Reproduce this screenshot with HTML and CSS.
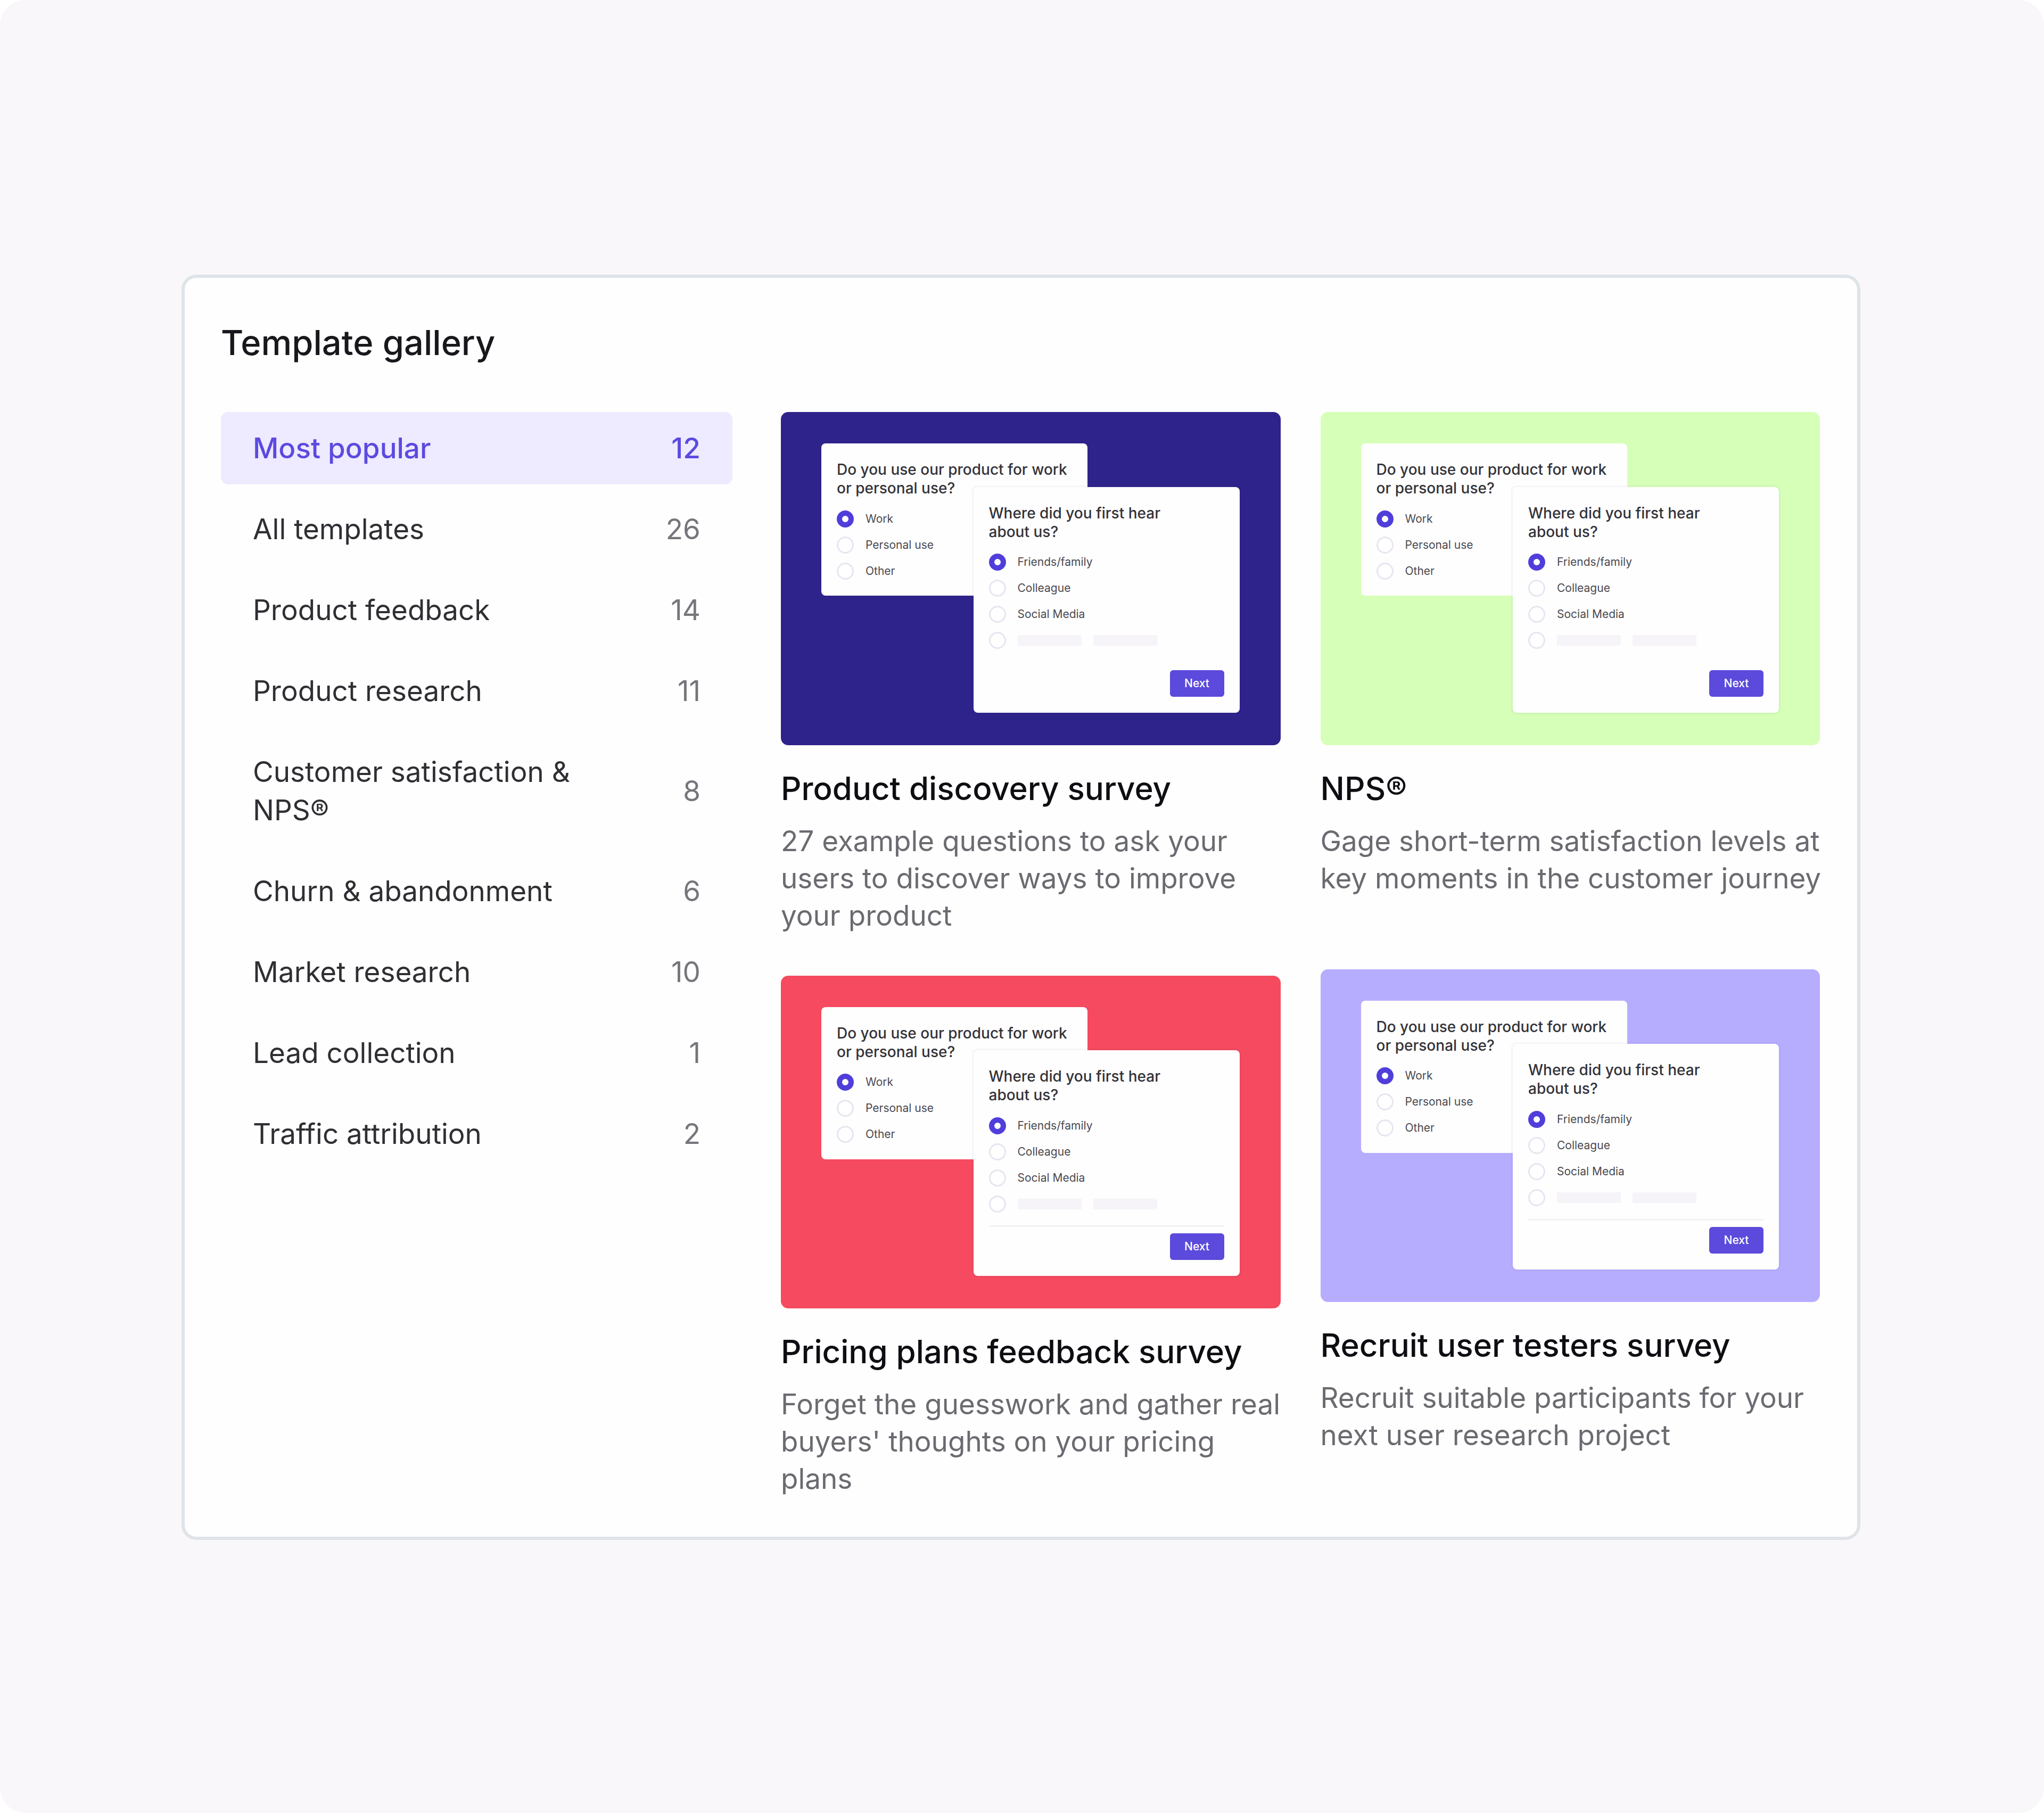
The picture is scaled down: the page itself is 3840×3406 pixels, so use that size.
FILE: index.html
```html
<!DOCTYPE html>
<html lang="en">
<head>
<meta charset="utf-8">
<title>Template gallery</title>
<link rel="stylesheet" href="styles.css">
</head>
<body>
<main class="page">
  <section class="panel">
    <h1 class="panel-title">Template gallery</h1>
    <div class="layout">
      <nav aria-label="Template categories">
        <ul class="categories">
          <li><a class="category is-active" href="#popular" aria-current="page"><span class="category-name">Most popular</span><span class="count">12</span></a></li>
          <li><a class="category" href="#all"><span class="category-name">All templates</span><span class="count">26</span></a></li>
          <li><a class="category" href="#feedback"><span class="category-name">Product feedback</span><span class="count">14</span></a></li>
          <li><a class="category" href="#research"><span class="category-name">Product research</span><span class="count">11</span></a></li>
          <li><a class="category" href="#nps"><span class="category-name">Customer satisfaction &amp; NPS®</span><span class="count">8</span></a></li>
          <li><a class="category" href="#churn"><span class="category-name">Churn &amp; abandonment</span><span class="count">6</span></a></li>
          <li><a class="category" href="#market"><span class="category-name">Market research</span><span class="count">10</span></a></li>
          <li><a class="category" href="#leads"><span class="category-name">Lead collection</span><span class="count">1</span></a></li>
          <li><a class="category" href="#traffic"><span class="category-name">Traffic attribution</span><span class="count">2</span></a></li>
        </ul>
      </nav>
      <div class="gallery">
        <div class="column">
          <article class="card">
            <div class="preview preview-navy">
              <form class="survey survey-back">
                <p class="question">Do you use our product for work or personal use?</p>
                <label class="option"><input type="radio" name="use1" checked>Work</label>
                <label class="option"><input type="radio" name="use1">Personal use</label>
                <label class="option"><input type="radio" name="use1">Other</label>
              </form>
              <form class="survey survey-front">
                <p class="question">Where did you first hear<br>about us?</p>
                <label class="option"><input type="radio" name="hear1" checked>Friends/family</label>
                <label class="option"><input type="radio" name="hear1">Colleague</label>
                <label class="option"><input type="radio" name="hear1">Social Media</label>
                <label class="option"><input type="radio" name="hear1" aria-label="Something else"><span class="bar"></span><span class="bar"></span></label>
                <div class="actions"><button class="next" type="button">Next</button></div>
              </form>
            </div>
            <h2 class="card-title">Product discovery survey</h2>
            <p class="card-text">27 example questions to ask your users to discover ways to improve your product</p>
          </article>
          <article class="card">
            <div class="preview preview-red">
              <form class="survey survey-back">
                <p class="question">Do you use our product for work or personal use?</p>
                <label class="option"><input type="radio" name="use2" checked>Work</label>
                <label class="option"><input type="radio" name="use2">Personal use</label>
                <label class="option"><input type="radio" name="use2">Other</label>
              </form>
              <form class="survey survey-front">
                <p class="question">Where did you first hear<br>about us?</p>
                <label class="option"><input type="radio" name="hear2" checked>Friends/family</label>
                <label class="option"><input type="radio" name="hear2">Colleague</label>
                <label class="option"><input type="radio" name="hear2">Social Media</label>
                <label class="option"><input type="radio" name="hear2" aria-label="Something else"><span class="bar"></span><span class="bar"></span></label>
                <div class="actions actions-ruled"><button class="next" type="button">Next</button></div>
              </form>
            </div>
            <h2 class="card-title">Pricing plans feedback survey</h2>
            <p class="card-text">Forget the guesswork and gather real buyers' thoughts on your pricing plans</p>
          </article>
        </div>
        <div class="column">
          <article class="card">
            <div class="preview preview-green">
              <form class="survey survey-back">
                <p class="question">Do you use our product for work or personal use?</p>
                <label class="option"><input type="radio" name="use3" checked>Work</label>
                <label class="option"><input type="radio" name="use3">Personal use</label>
                <label class="option"><input type="radio" name="use3">Other</label>
              </form>
              <form class="survey survey-front">
                <p class="question">Where did you first hear<br>about us?</p>
                <label class="option"><input type="radio" name="hear3" checked>Friends/family</label>
                <label class="option"><input type="radio" name="hear3">Colleague</label>
                <label class="option"><input type="radio" name="hear3">Social Media</label>
                <label class="option"><input type="radio" name="hear3" aria-label="Something else"><span class="bar"></span><span class="bar"></span></label>
                <div class="actions"><button class="next" type="button">Next</button></div>
              </form>
            </div>
            <h2 class="card-title">NPS®</h2>
            <p class="card-text">Gage short-term satisfaction levels at key moments in the customer journey</p>
          </article>
          <article class="card">
            <div class="preview preview-lavender">
              <form class="survey survey-back">
                <p class="question">Do you use our product for work or personal use?</p>
                <label class="option"><input type="radio" name="use4" checked>Work</label>
                <label class="option"><input type="radio" name="use4">Personal use</label>
                <label class="option"><input type="radio" name="use4">Other</label>
              </form>
              <form class="survey survey-front">
                <p class="question">Where did you first hear<br>about us?</p>
                <label class="option"><input type="radio" name="hear4" checked>Friends/family</label>
                <label class="option"><input type="radio" name="hear4">Colleague</label>
                <label class="option"><input type="radio" name="hear4">Social Media</label>
                <label class="option"><input type="radio" name="hear4" aria-label="Something else"><span class="bar"></span><span class="bar"></span></label>
                <div class="actions actions-ruled"><button class="next" type="button">Next</button></div>
              </form>
            </div>
            <h2 class="card-title">Recruit user testers survey</h2>
            <p class="card-text">Recruit suitable participants for your next user research project</p>
          </article>
        </div>
      </div>
    </div>
  </section>
</main>
</body>
</html>
```
FILE: styles.css
```css
* {
  box-sizing: border-box;
}

body {
  margin: 0;
  background: #ffffff;
  color: #18171c;
  font-family: Inter, "Liberation Sans", sans-serif;
}

h1, h2, p, ul {
  margin: 0;
  padding: 0;
}

.page {
  min-height: 100vh;
  padding: 516px 345px 512px 341px;
  border-radius: 48px;
  background: #f9f7f9;
}

.panel {
  padding: 82px 70px 74px 68px;
  border: 6px solid #dfe4e9;
  border-radius: 28px;
  background: #fefefe;
}

.panel-title {
  margin-bottom: 90px;
  font-size: 65px;
  font-weight: 500;
  line-height: 80px;
}

.layout {
  display: grid;
  grid-template-columns: 961fr 1952fr;
  column-gap: 91px;
  align-items: start;
}

/* Category list */
.categories {
  display: flex;
  flex-direction: column;
  gap: 16px;
  list-style: none;
}

.category {
  display: flex;
  align-items: center;
  justify-content: space-between;
  gap: 60px;
  padding: 32px 60px;
  border-radius: 14px;
  color: #2f2e33;
  font-size: 53px;
  line-height: 72px;
  text-decoration: none;
}

.category-name {
  max-width: 640px;
}

.count {
  color: #77757b;
}

.is-active {
  background: #eeeaff;
  color: #5b4ae0;
  font-weight: 500;
}

.is-active .count {
  color: inherit;
}

/* Template cards */
.gallery {
  display: grid;
  grid-template-columns: 1fr 1fr;
  column-gap: 75px;
}

.column {
  display: flex;
  flex-direction: column;
  gap: 78px;
}

.card-title {
  margin: 41px 0 24px;
  color: #0e0d12;
  font-size: 60px;
  font-weight: 500;
  line-height: 80px;
}

.card-text {
  min-height: 198px;
  margin-right: -8px;
  color: #6c6a70;
  font-size: 53px;
  line-height: 70px;
}

.preview {
  position: relative;
  aspect-ratio: 3 / 2;
  padding: 59px 76px;
  border-radius: 14px;
}

.preview-navy { background: #2e238a; }
.preview-green { background: #d6ffb8; }
.preview-red { background: #f54a5f; }
.preview-lavender { background: #b7adff; }

/* Miniature survey forms */
.survey {
  width: 500px;
  padding: 32px 29px 22px;
  border-radius: 8px;
  background: #fefefe;
}

.survey-front {
  position: absolute;
  right: 77px;
  bottom: 61px;
  padding-bottom: 30px;
  box-shadow: 0 0 0 3px rgb(46 35 138 / 4%);
}

.question {
  margin-bottom: 15px;
  color: #333238;
  font-size: 28px;
  font-weight: 500;
  line-height: 35px;
}

.option {
  display: flex;
  align-items: center;
  gap: 22px;
  height: 49px;
  color: #4a494f;
  font-size: 21px;
  line-height: 28px;
}

.option input {
  appearance: none;
  flex: none;
  width: 32px;
  height: 32px;
  margin: 0;
  border: 3px solid #e9e4f1;
  border-radius: 50%;
  background: #ffffff;
}

.option input:checked {
  border: 10px solid #503edb;
}

.bar {
  width: 120px;
  height: 20px;
  background: #f6f4f8;
}

.actions {
  display: flex;
  justify-content: flex-end;
  margin-top: 16px;
  padding-top: 12px;
  border-top: 3px solid transparent;
}

.actions-ruled {
  border-top-color: #f3f1f6;
}

.next {
  width: 102px;
  height: 50px;
  padding: 0;
  border: 0;
  border-radius: 6px;
  background: #5b4adb;
  color: #ffffff;
  font: 500 21px/28px Inter, "Liberation Sans", sans-serif;
}
```
